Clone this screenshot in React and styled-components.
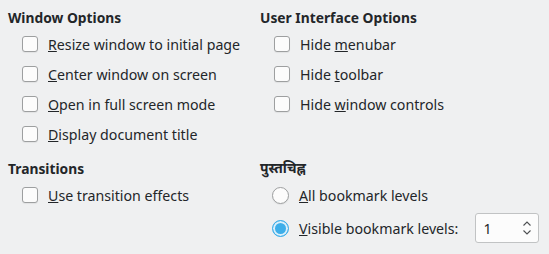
import React from 'react';
import styled, { createGlobalStyle } from 'styled-components';

const GlobalStyle = createGlobalStyle`
	html, body {
		margin: 0;
		padding: 0;
		background: #eff0f1;
	}
	body {
		font-family: 'Noto Sans', 'DejaVu Sans', sans-serif;
		font-size: 14.2px;
		color: #232629;
	}
`;

const Page = styled.div`
	width: 549px;
	height: 254px;
	box-sizing: border-box;
	padding: 8px 0 0 8px;
	display: flex;
	flex-direction: column;
	gap: 10px;
`;

const Section = styled.div`
	display: grid;
	grid-template-columns: 252px 1fr;
	align-items: start;
`;

const Group = styled.div`
	display: flex;
	flex-direction: column;
	margin-top: ${p => p.$shift || 0}px;
`;

const Heading = styled.div`
	font-weight: bold;
	font-size: 13.8px;
	height: 20px;
	line-height: 20px;
	margin-bottom: 1px;
	white-space: nowrap;
`;

const Row = styled.label`
	display: flex;
	align-items: center;
	height: ${p => p.$h || 30}px;
	padding-left: 14px;
	gap: 10px;
	white-space: nowrap;
`;

const Box = styled.span`
	width: 16px;
	height: 16px;
	box-sizing: border-box;
	border: 1px solid #9d9fa0;
	border-radius: 3px;
	background: #fcfcfc;
	box-shadow: 0 1px 1px rgba(0, 0, 0, 0.06);
	flex: none;
`;

const Radio = styled.span`
	width: 17px;
	height: 17px;
	box-sizing: border-box;
	border-radius: 50%;
	flex: none;
	border: 1px solid ${p => (p.$on ? '#3daee9' : '#9d9fa0')};
	background: ${p => (p.$on ? '#3daee9' : '#fcfcfc')};
	box-shadow: ${p => (p.$on ? 'inset 0 0 0 2px #d9effb' : '0 1px 1px rgba(0,0,0,0.06)')};
	margin-left: -2px;
`;

const Spin = styled.div`
	margin-left: 7px;
	width: 64px;
	height: 30px;
	box-sizing: border-box;
	border: 1px solid #c1c3c4;
	border-radius: 3px;
	background: #fcfcfc;
	display: flex;
	align-items: center;
	justify-content: space-between;
	padding: 0 6px 0 7px;
`;

const Arrows = () => (
	<svg width="10" height="16" viewBox="0 0 10 16" fill="none" stroke="#4d4f51" strokeWidth="1.1">
		<path d="M1.5 5.5 L5 2 L8.5 5.5" />
		<path d="M1.5 10.5 L5 14 L8.5 10.5" />
	</svg>
);

const Check = ({ pre = '', u, post }) => (
	<Row>
		<Box />
		<span>{pre}<u>{u}</u>{post}</span>
	</Row>
);

export default function App() {
	return (
		<>
			<GlobalStyle />
			<Page>
				<Section>
					<Group>
						<Heading>Window Options</Heading>
						<Check u="R" post="esize window to initial page" />
						<Check u="C" post="enter window on screen" />
						<Check u="O" post="pen in full screen mode" />
						<Check u="D" post="isplay document title" />
					</Group>
					<Group>
						<Heading>User Interface Options</Heading>
						<Check pre="Hide " u="m" post="enubar" />
						<Check pre="Hide " u="t" post="oolbar" />
						<Check pre="Hide " u="w" post="indow controls" />
					</Group>
				</Section>
				<Section>
					<Group>
						<Heading>Transitions</Heading>
						<Check u="U" post="se transition effects" />
					</Group>
					<Group $shift={-1}>
						<Heading>पुस्तचिह्न</Heading>
						<Row $h={32}>
							<Radio />
							<span><u>A</u>ll bookmark levels</span>
						</Row>
						<Row $h={34}>
							<Radio $on />
							<span><u>V</u>isible bookmark levels:</span>
							<Spin>
								<span>1</span>
								<Arrows />
							</Spin>
						</Row>
					</Group>
				</Section>
			</Page>
		</>
	);
}
